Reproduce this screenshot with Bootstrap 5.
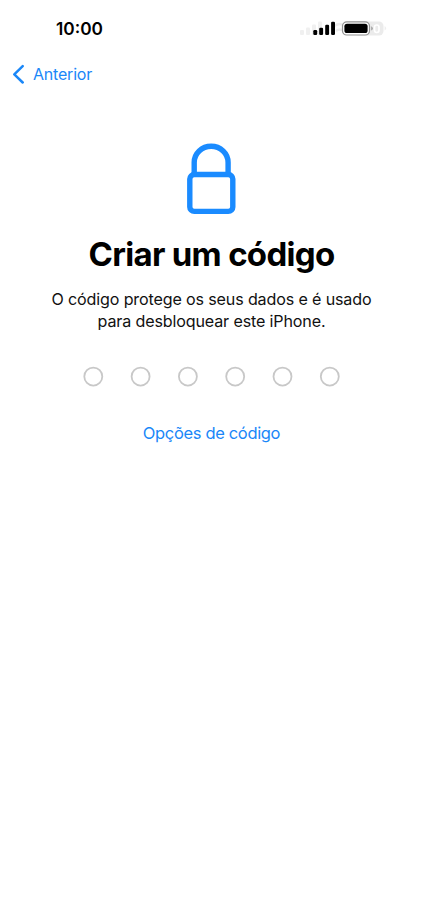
<!DOCTYPE html>
<html lang="pt">
<head>
<meta charset="utf-8">
<meta name="viewport" content="width=device-width, initial-scale=1">
<title>Criar um código</title>
<link href="https://cdn.jsdelivr.net/npm/bootstrap@5.3.0/dist/css/bootstrap.min.css" rel="stylesheet">
<style>
body{font-family:Inter,sans-serif;color:#000;background:#fff;min-height:917px}
.status{height:56px;padding:0 36px 0 56px}
.clock{font-size:17.3px;font-weight:600;line-height:20px;letter-spacing:0;padding-top:2px}
.ios-link{color:#1a87f8;text-decoration:none;font-size:16.5px;line-height:22px;letter-spacing:-.34px}
.back{height:36px;padding-left:12px}
.back a{gap:8px;font-size:16px;letter-spacing:-.2px}
.lock{margin-top:51px}
.title{font-size:33px;font-weight:700;line-height:40px;letter-spacing:-.7px;margin-top:19px}
.note{font-size:16.1px;line-height:22px;letter-spacing:-.15px;color:#111;margin-top:14px}
.dots{margin-top:34px}
.options{margin-top:34px}
</style>
<script src="https://cdn.jsdelivr.net/npm/bootstrap@5.3.0/dist/js/bootstrap.bundle.min.js"></script>
</head>
<body>
<header>
  <div class="status d-flex justify-content-between align-items-center">
    <span class="clock">10:00</span>
    <svg width="88" height="18" viewBox="299 19 88 18">
      <g fill="#f0f0f0"><rect x="300" y="30" width="4" height="5" rx="1"/><rect x="306" y="27.500" width="4" height="7.500" rx="1"/><rect x="312" y="24.500" width="4" height="10.500" rx="1"/><rect x="318" y="21.500" width="4" height="13.500" rx="1"/></g>
      <g fill="none" stroke="#ededed" stroke-width="2.200"><path d="M333 27q7-6 13 0M336 31q4-3 7 0"/></g>
      <rect x="354" y="21.500" width="29.500" height="14" rx="4.500" fill="#ebebeb"/>
      <path d="M384.600 26v4.500q1.500-.7 1.500-2.200t-1.500-2.300" fill="#eee"/>
      <rect x="374.500" y="25" width="4.500" height="7.500" rx="2.200" fill="none" stroke="#fff" stroke-width="1.700"/>
      <g><rect x="313.300" y="30" width="3.900" height="5" rx="1.200"/><rect x="319.200" y="27.700" width="3.900" height="7.300" rx="1.200"/><rect x="325.200" y="24.800" width="3.900" height="10.200" rx="1.200"/><rect x="331.100" y="21.800" width="3.900" height="13.200" rx="1.200"/></g>
      <rect x="342.500" y="21.800" width="27" height="13.200" rx="4.300" fill="#fff" stroke="#929292" stroke-width="1.200"/>
      <rect x="344.400" y="23.700" width="23.200" height="9.400" rx="2.600"/>
      <path d="M371.300 26.200v4.300q1.400-.7 1.400-2.100t-1.400-2.200" fill="#929292"/>
    </svg>
  </div>
  <nav class="back d-flex align-items-center">
    <a href="#" class="ios-link d-flex align-items-center">
      <svg width="13" height="20" viewBox="0 0 13 20" fill="none" stroke="#1a87f8" stroke-width="2.500" stroke-linecap="round" stroke-linejoin="round"><path d="M10.700 2.100 2.300 10.300l8.400 8.200"/></svg>
      <span>Anterior</span>
    </a>
  </nav>
</header>
<main class="d-flex flex-column align-items-center text-center">
  <svg class="lock d-block" width="51" height="72" viewBox="186.200 143 51 72" fill="none" stroke="#1a8bff" stroke-width="5.400"><path d="M194.400 174v-11.500a16.950 16.200 0 0 1 33.900 0V174"/><rect x="190" y="174.500" width="43" height="36.900" rx="4.500"/></svg>
  <h1 class="title mb-0">Criar um código</h1>
  <p class="note mb-0">O código protege os seus dados e é usado<br>para desbloquear este iPhone.</p>
  <svg class="dots d-block" width="259" height="22" viewBox="82 366 259 22" fill="none" stroke="#c8c8c8" stroke-width="1.800"><circle cx="93.300" cy="376.600" r="9"/><circle cx="140.600" cy="376.600" r="9"/><circle cx="187.900" cy="376.600" r="9"/><circle cx="235.200" cy="376.600" r="9"/><circle cx="282.500" cy="376.600" r="9"/><circle cx="329.800" cy="376.600" r="9"/></svg>
  <a href="#" class="options ios-link">Opções de código</a>
</main>
</body>
</html>
